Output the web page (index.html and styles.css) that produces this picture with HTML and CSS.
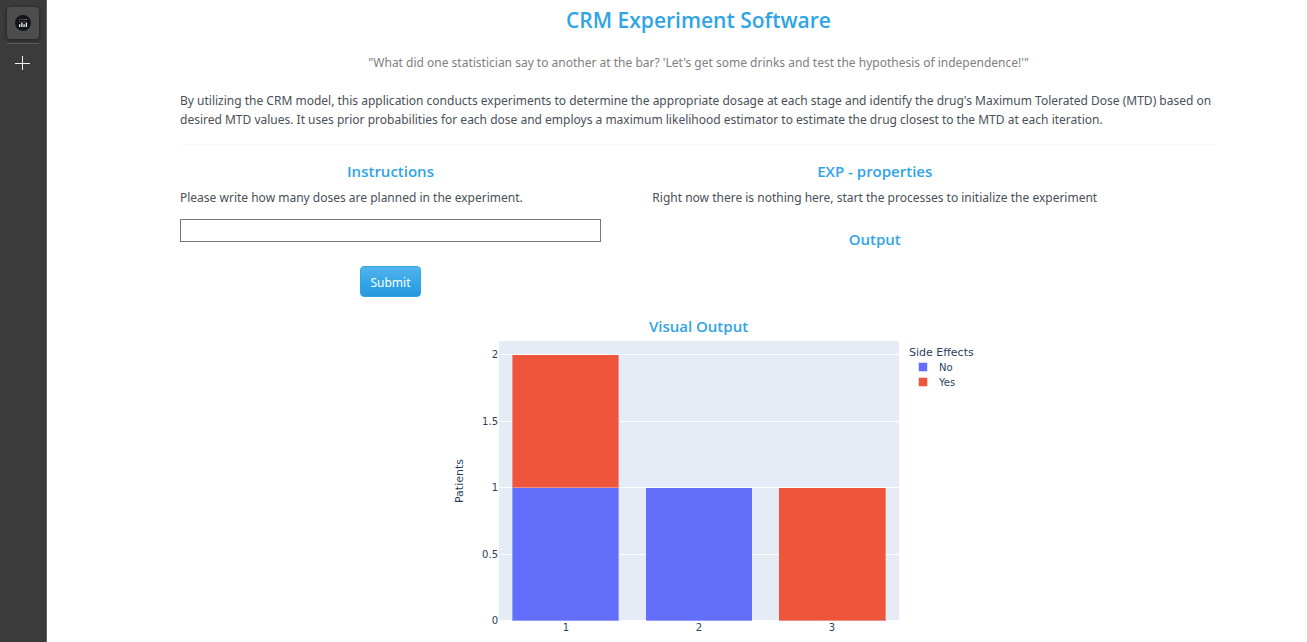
FILE: index.html
```
<!DOCTYPE html>
<html lang="en">
<head>
<meta charset="utf-8">
<title>CRM Experiment Software</title>
<link rel="stylesheet" href="styles.css">
</head>
<body>
<div class="app">
  <nav class="sidebar" aria-label="Tabs">
    <button class="tab" type="button" aria-label="CRM Experiment">
      <svg width="16" height="16" viewBox="0 0 16 16" aria-hidden="true">
        <circle cx="8" cy="8" r="8" fill="#111518"/>
        <path d="M4 9.200h1.300V12H4zM6.200 7.500h1.300V12H6.200zM8.400 9.200h1.300V12H8.400zM10.700 7.500H12V12h-1.300z" fill="#f0f0f0"/>
        <path d="M4 4h1.300v1H4zM4 6.200h1.300v1H4zM6.200 4h1.300v1H6.200z" fill="#9c4460"/>
        <path d="M8.400 4h1.300v1H8.400zM8.400 6.200h1.300v1H8.400z" fill="#8a6875"/>
        <path d="M10.700 4H12v1h-1.300z" fill="#7199b8"/>
      </svg>
    </button>
    <button class="new-tab" type="button" aria-label="New tab">
      <svg width="16" height="16" viewBox="0 0 16 16" aria-hidden="true">
        <path d="M7 1h1v14H7zM0 8h15v1H0z" fill="#f4f4f4"/>
      </svg>
    </button>
  </nav>
  <main class="content">
    <h1>CRM Experiment Software</h1>
    <p class="quote">"What did one statistician say to another at the bar? 'Let's get some drinks and test the hypothesis of independence!'"</p>
    <p class="intro">By utilizing the CRM model, this application conducts experiments to determine the appropriate dosage at each stage and identify the drug's Maximum Tolerated Dose (MTD) based on desired MTD values. It uses prior probabilities for each dose and employs a maximum likelihood estimator to estimate the drug closest to the MTD at each iteration.</p>
    <hr>
    <div class="panels">
      <form class="panel">
        <h2>Instructions</h2>
        <label for="doses">Please write how many doses are planned in the experiment.</label>
        <input id="doses" type="text">
        <button class="submit" type="button">Submit</button>
      </form>
      <section class="panel properties">
        <h2>EXP - properties</h2>
        <p>Right now there is nothing here, start the processes to initialize the experiment</p>
        <h2>Output</h2>
      </section>
    </div>
    <section class="visual">
      <h2>Visual Output</h2>
      <svg class="chart" width="599" height="300" viewBox="0 0 599 300" role="img" aria-label="Patients by dose and side effects">
        <rect x="100" y="0" width="400" height="279" fill="#e5ecf6"/>
        <path d="M100 13.500h400M100 80.500h400M100 146.500h400M100 213.500h400" stroke="#fff"/>
        <path d="M113 147h107v133H113zM247 147h106v133H247z" fill="#636efa"/>
        <path d="M113 14h107v133H113zM380 147h107v133H380z" fill="#ef553b"/>
        <path d="M113.500 14v266M219.500 14v266M114 146.500h105M114 279.500h105M247 279.500h106M380 279.500h107M486.500 147v132" stroke="#e5ecf6" stroke-opacity=".4"/>
        <g stroke="#fff" stroke-opacity=".5">
          <rect x="519.500" y="21.500" width="9" height="9" fill="#636efa"/>
          <rect x="519.500" y="36.500" width="9" height="9" fill="#ef553b"/>
        </g>
        <g class="ticks-y">
          <text x="99" y="17">2</text>
          <text x="99" y="84">1.5</text>
          <text x="99" y="150">1</text>
          <text x="99" y="217">0.5</text>
          <text x="99" y="283">0</text>
        </g>
        <g class="ticks-x">
          <text x="167" y="290">1</text>
          <text x="300" y="290">2</text>
          <text x="433" y="290">3</text>
        </g>
        <text class="axis-title" transform="translate(64 140) rotate(-90)">Patients</text>
        <text x="510" y="15">Side Effects</text>
        <text class="legend-item" x="540" y="30">No</text>
        <text class="legend-item" x="540" y="45">Yes</text>
      </svg>
    </section>
  </main>
</div>
</body>
</html>
```
FILE: styles.css
```
* { box-sizing: border-box; }
body {
  margin: 0;
  background: #fff;
  color: #495057;
  font-family: "Segoe UI", "Noto Sans", sans-serif;
  font-size: 12px;
  line-height: 19px;
}
.app { display: flex; min-height: 100vh; }
.sidebar {
  flex: 0 0 47px;
  padding: 7px;
  background: #3b3b3b;
  border-right: 1px solid #626262;
}
.tab, .new-tab {
  display: flex;
  align-items: center;
  justify-content: center;
  width: 32px;
  height: 32px;
  padding: 0;
  border: 0;
  background: none;
}
.tab {
  border-radius: 4px;
  background: #4d4d4d;
  box-shadow: 0 1px 4px #1c1c1c;
}
.new-tab {
  height: 38px;
  margin-top: 4px;
  border-top: 1px solid #5c5c5c;
}
.content { flex: 1; padding: 7px 90px 0 133px; }
h1, h2, p { margin: 0; }
h1, h2 {
  color: #2fa4e7;
  font-family: "Segoe UI", "Open Sans", sans-serif;
  font-weight: 600;
  text-align: center;
}
h1 { font-size: 21px; line-height: 27px; }
h2 { font-size: 15px; line-height: 18px; margin-bottom: 8px; }
.quote { margin: 19px 0; color: #808080; text-align: center; }
hr { margin: 15px 0 17px; border: 0; border-top: 1px solid #f8f8f8; }
.panels { display: flex; gap: 5%; }
.panel { display: flex; flex-direction: column; width: 40.6%; }
.properties { width: 42.8%; align-items: center; }
.properties p { margin-bottom: 23px; white-space: nowrap; }
#doses {
  width: 100%;
  height: 23px;
  margin-top: 12px;
  border: 1px solid #767676;
  background: #fff;
  font: inherit;
}
.submit {
  align-self: center;
  margin-top: 24px;
  padding: 6px 9px 4px;
  border: 1px solid #2fa4e7;
  border-radius: 4px;
  background: linear-gradient(#54b4eb, #2fa4e7 60%, #2a98da);
  color: #fff;
  font: inherit;
}
.visual { display: flex; flex-direction: column; align-items: center; margin-top: 20px; }
.visual h2 { margin-bottom: 6px; }
.chart { display: block; font-family: Verdana, "DejaVu Sans", sans-serif; font-size: 11px; fill: #2a3f5f; }
.ticks-y, .ticks-x, .legend-item { font-size: 10px; }
.ticks-y { text-anchor: end; }
.ticks-x, .axis-title { text-anchor: middle; }
```
